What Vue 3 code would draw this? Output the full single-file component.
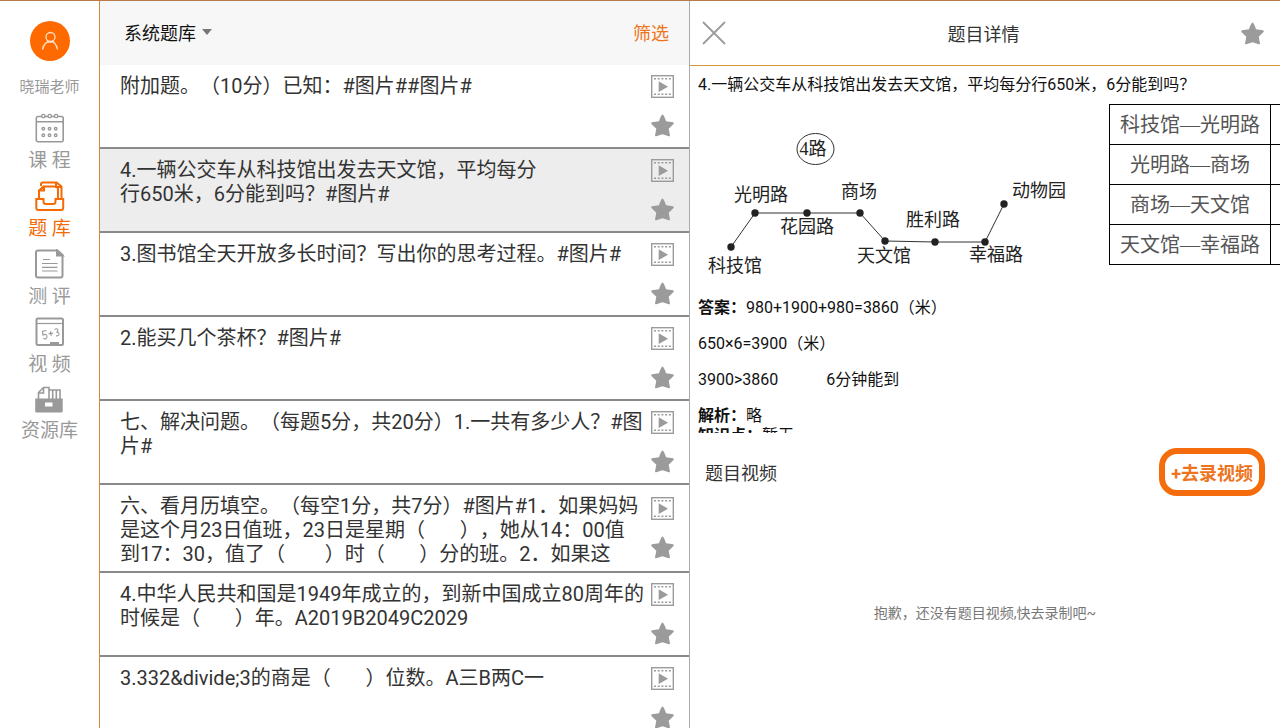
<script setup>
const navItems = [
  { id: 'course', label: '课 程' },
  { id: 'bank', label: '题 库', active: true },
  { id: 'exam', label: '测 评' },
  { id: 'video', label: '视 频' },
  { id: 'library', label: '资源库' }
]

const questions = [
  { text: '附加题。（10分）已知：#图片##图片#' },
  { text: '4.一辆公交车从科技馆出发去天文馆，平均每分\n行650米，6分能到吗？#图片#', selected: true },
  { text: '3.图书馆全天开放多长时间？写出你的思考过程。#图片#' },
  { text: '2.能买几个茶杯？#图片#' },
  { text: '七、解决问题。（每题5分，共20分）1.一共有多少人？#图\n片#' },
  { text: '六、看月历填空。（每空1分，共7分）#图片#1．如果妈妈\n是这个月23日值班，23日是星期（       ），她从14：00值\n到17：30，值了（        ）时（       ）分的班。2．如果这' },
  { text: '4.中华人民共和国是1949年成立的，到新中国成立80周年的\n时候是（       ）年。A2019B2049C2029' },
  { text: '3.332&divide;3的商是（       ）位数。A三B两C一' }
]

const stops = [
  [33, 143], [57, 109], [109, 109], [162, 109], [187, 137], [237, 138], [287, 138], [306, 100]
]
const stopPath = stops.map((s) => s.join(',')).join(' ')
const stopLabels = [
  { x: 37, y: 168, name: '科技馆' },
  { x: 63, y: 97, name: '光明路' },
  { x: 109, y: 129, name: '花园路' },
  { x: 161, y: 94, name: '商场' },
  { x: 186, y: 158, name: '天文馆' },
  { x: 235, y: 122, name: '胜利路' },
  { x: 298, y: 157, name: '幸福路' },
  { x: 341, y: 93, name: '动物园' }
]

const segments = ['科技馆—光明路', '光明路—商场', '商场—天文馆', '天文馆—幸福路']
</script>

<template>
  <div class="app">
    <nav class="sidebar">
      <button class="avatar" aria-label="晓瑞老师">
        <svg width="40" height="40" viewBox="0 0 40 40">
          <circle cx="20.500" cy="16" r="4.500" />
          <path d="M12.500 28.500c1-5 4-8 8-8s6 3 7 8M17 20l2 1h3l2-1" />
        </svg>
      </button>
      <div class="name">晓瑞老师</div>
      <a v-for="n in navItems" :key="n.id" href="#" class="nav" :class="{ active: n.active }">
        <svg v-if="n.id === 'course'" width="30" height="30" viewBox="0 0 30 30">
          <path d="M6.500 3.500H3a1.700 1.700 0 0 0-1.700 1.700V27A1.700 1.700 0 0 0 3 28.700h23.500a1.700 1.700 0 0 0 1.700-1.700V5.200a1.700 1.700 0 0 0-1.700-1.700H23M10 3.500h3M16.500 3.500h3M1.500 8.800h26.500" />
          <g stroke-width="1.300">
            <circle cx="8.300" cy="3" r="1.700" /><circle cx="14.700" cy="3" r="1.700" /><circle cx="21.100" cy="3" r="1.700" />
            <circle cx="8.300" cy="15.800" r="1.300" /><circle cx="14.500" cy="15.800" r="1.300" /><circle cx="20.700" cy="15.800" r="1.300" />
            <circle cx="8.300" cy="22.300" r="1.300" /><circle cx="14.500" cy="22.300" r="1.300" /><circle cx="20.700" cy="22.300" r="1.300" />
          </g>
        </svg>
        <svg v-else-if="n.id === 'bank'" class="bold" width="30" height="30" viewBox="0 0 30 30">
          <path d="M4 17V9.500L8.500 5.500H20.500q2.500 0 2.500 3V17M4.500 9.500H9V5.500" />
          <path d="M6 5V3q0-1.500 2-1.500H21.500l5 4V17M21 1.500v4.500h5.500" />
          <path d="M1.300 18H8.500v2.500q0 2.500 2.500 2.500h7q2.500 0 2.500-2.500V18h7.700v9q0 2-2 2H3.300q-2 0-2-2Z" />
        </svg>
        <svg v-else-if="n.id === 'exam'" class="bold" width="30" height="30" viewBox="0 0 30 30">
          <path d="M3 1.500H22.500L27.500 6V26.500q0 2-2 2H3q-2 0-2-2v-23q0-2 2-2Z" />
          <path d="M22 1.500v5h5.500Z" fill="currentColor" />
          <path d="M8 10.500h7M7 14.500h15.500M7 18.300h15.500M7 22h15.500" stroke-width="1.200" />
        </svg>
        <svg v-else-if="n.id === 'video'" class="bold" width="30" height="30" viewBox="0 0 30 30">
          <rect x="1.500" y="1.500" width="26.500" height="26.500" rx="1.500" />
          <path d="M1.500 6.500H28" stroke-width="1.200" />
          <path d="M15 25h9v3h-9Z" fill="currentColor" stroke="none" />
          <path d="M11.500 13.500l-4 .6.500 4c2-1.500 4-.5 4 1.500s-2 3-3.700 1.500M13.500 16.800l4.500-.7M15.500 14.300l.8 4.500M19.500 12.500c3-2 5 1 2 2.700 4-.2 3 4.500-.5 3.500" stroke-width="1.100" />
        </svg>
        <svg v-else width="30" height="28" viewBox="0 0 30 28">
          <path d="M1.200 13.500h27.500V26q0 1.500-1.500 1.500h-24.500q-1.500 0-1.500-1.500Z" fill="currentColor" stroke="none" />
          <path d="M4.500 14V7.500L9.500 2.500H15V14M4.500 8h5V3M15 5h11V14M18.700 5v9M22.300 5v9" />
          <path d="M11 17.500h7.500v4H11Z" fill="#fff" stroke="none" />
        </svg>
        <span>{{ n.label }}</span>
      </a>
    </nav>

    <section class="list">
      <header class="list-head">
        <button class="picker">系统题库<i class="caret"></i></button>
        <button class="filter">筛选</button>
      </header>
      <ul class="rows">
        <li v-for="(q, i) in questions" :key="i" class="row" :class="{ selected: q.selected }">
          <p>{{ q.text }}</p>
          <div class="actions">
            <button aria-label="视频">
              <svg width="23" height="23" viewBox="0 0 23 23">
                <rect x="0.700" y="0.700" width="21.600" height="21.600" fill="none" stroke="currentColor" stroke-width="1.400" />
                <path d="M3 3.800h17M3 19.300h17" fill="none" stroke="currentColor" stroke-width="1.500" stroke-dasharray="2 1.700" />
                <path d="M7.700 6.300 17 11.700 7.700 17Z" fill="currentColor" />
              </svg>
            </button>
            <button aria-label="收藏">
              <svg width="23" height="23" viewBox="0 0 23 23">
                <path d="M11.500.5Q13 1 15 7.300l7 .9q1.500.6.300 2L17.700 14.800 19 21.500q-.4 1.300-2 .6L11.500 20.300 6 22.100q-1.600.7-2-.6L5.300 14.800.7 10.200q-1.200-1.400.3-2l7-.9Q10 1 11.500.5Z" fill="currentColor" />
              </svg>
            </button>
          </div>
        </li>
      </ul>
    </section>

    <main class="detail">
      <header class="detail-head">
        <button aria-label="关闭">
          <svg width="24" height="24" viewBox="0 0 24 24"><path d="M1 1 23 23M23 1 1 23" fill="none" stroke="currentColor" stroke-width="1.800" /></svg>
        </button>
        <h1>题目详情</h1>
        <button aria-label="收藏">
          <svg width="23" height="23" viewBox="0 0 23 23">
            <path d="M11.500.5Q13 1 15 7.300l7 .9q1.500.6.300 2L17.700 14.800 19 21.500q-.4 1.300-2 .6L11.500 20.300 6 22.100q-1.600.7-2-.6L5.300 14.800.7 10.200q-1.200-1.400.3-2l7-.9Q10 1 11.500.5Z" fill="currentColor" />
          </svg>
        </button>
      </header>

      <article class="content">
        <p class="stem">4.一辆公交车从科技馆出发去天文馆，平均每分行650米，6分能到吗？</p>
        <div class="figures">
          <svg class="route" width="411" height="184" viewBox="0 0 411 184">
            <ellipse cx="117.500" cy="45" rx="18.500" ry="15.500" />
            <text x="115" y="51">4路</text>
            <polyline :points="stopPath" />
            <circle v-for="(s, i) in stops" :key="i" :cx="s[0]" :cy="s[1]" r="3.700" />
            <text v-for="l in stopLabels" :key="l.name" :x="l.x" :y="l.y">{{ l.name }}</text>
          </svg>
          <table>
            <tbody>
              <tr v-for="s in segments" :key="s"><td>{{ s }}</td><td></td></tr>
            </tbody>
          </table>
        </div>
        <p><b>答案：</b>980+1900+980=3860（米）</p>
        <p>650×6=3900（米）</p>
        <p>3900&gt;3860　　　6分钟能到</p>
        <div><b>解析：</b>略</div>
        <div><b>知识点：</b>暂无</div>
      </article>

      <section class="videos">
        <div class="videos-head">
          <h2>题目视频</h2>
          <button class="record">+去录视频</button>
        </div>
        <div class="empty">抱歉，还没有题目视频,快去录制吧~</div>
      </section>
    </main>
  </div>
</template>

<style>
body {
  margin: 0;
}
</style>

<style scoped>
* {
  box-sizing: border-box;
}
.app {
  display: grid;
  grid-template-columns: 100px minmax(0, 1fr) minmax(0, 1fr);
  height: 100vh;
  overflow: hidden;
  border-top: 1px solid #b97b4b;
  background: #fff;
  color: #333;
  font-family: Roboto, "Noto Sans CJK SC", sans-serif;
  text-spacing-trim: space-all;
}
button {
  display: flex;
  align-items: center;
  padding: 0;
  border: 0;
  background: none;
  color: #9b9b9b;
  font: inherit;
  cursor: pointer;
}
h1,
h2 {
  margin: 0;
  font-size: 18px;
  font-weight: 400;
}
.sidebar {
  display: flex;
  flex-direction: column;
  align-items: center;
  padding-top: 20px;
  border-right: 1px solid #cf8a3c;
}
.avatar {
  border-radius: 50%;
  background: #ff6a00;
}
.avatar svg {
  fill: none;
  stroke: #ffe0c4;
  stroke-width: 1.300;
}
.name {
  margin: 15px 0;
  font-size: 15px;
  line-height: 22px;
  color: #999;
}
.nav {
  display: flex;
  flex-direction: column;
  align-items: center;
  gap: 7px;
  margin-bottom: 9px;
  color: #999;
  font-size: 19px;
  line-height: 22px;
  text-decoration: none;
}
.nav.active {
  color: #f56a05;
}
.nav svg {
  fill: none;
  stroke: currentColor;
  stroke-width: 1.600;
}
.nav svg.bold {
  stroke-width: 2;
}
.list {
  display: flex;
  flex-direction: column;
  min-height: 0;
  border-right: 1px solid #aaa;
  overflow: hidden;
}
.list-head {
  display: flex;
  flex: none;
  align-items: center;
  justify-content: space-between;
  height: 64px;
  padding: 0 20px 2px 24px;
  background: #f7f7f7;
  font-size: 18px;
}
.picker {
  gap: 6px;
  color: #111;
}
.caret {
  border: 5px solid transparent;
  border-top: 6px solid #777;
  border-bottom: 0;
}
.filter {
  color: #f0741a;
}
.rows {
  flex: 1;
  min-height: 0;
  margin: 0;
  padding: 0;
  overflow: hidden;
  list-style: none;
}
.row {
  display: flex;
  align-items: center;
  justify-content: space-between;
  min-height: 84px;
  padding: 0 15px 0 20px;
  border-bottom: 2px solid #8a8a8a;
}
.row.selected {
  background: #ededed;
}
.row p {
  align-self: flex-start;
  margin: 0;
  padding: 9px 0 5px;
  font-size: 20px;
  line-height: 24px;
  white-space: pre;
}
.actions {
  display: flex;
  flex-direction: column;
  gap: 16px;
}
.detail {
  display: flex;
  flex-direction: column;
  min-height: 0;
}
.detail-head {
  display: flex;
  flex: none;
  align-items: center;
  justify-content: space-between;
  height: 65px;
  padding: 0 16px 0 12px;
  border-bottom: 1px solid #d29a3a;
}
.content {
  flex: 36 1 0;
  min-height: 0;
  padding-left: 8px;
  overflow: hidden;
  color: #111;
  font-size: 16px;
  line-height: 20px;
}
.content p {
  margin: 0 0 16px;
}
.content .stem {
  margin: 9px 0;
}
.figures {
  display: flex;
  align-items: flex-start;
  margin-bottom: 10px;
  font-family: "Liberation Serif", "Noto Sans CJK SC", serif;
}
.route {
  flex: none;
  fill: #222;
  font-size: 18px;
  text-anchor: middle;
}
.route ellipse,
.route polyline {
  fill: none;
  stroke: #333;
}
table {
  flex: none;
  border-collapse: collapse;
  color: #555;
  font-size: 20px;
}
td {
  height: 40px;
  min-width: 100px;
  padding: 0 10px;
  border: 1px solid #000;
  text-align: center;
}
.videos {
  display: flex;
  flex: 29 1 0;
  flex-direction: column;
  min-height: 0;
}
.videos-head {
  display: flex;
  align-items: center;
  justify-content: space-between;
  padding: 15px 15px 0;
}
.record {
  height: 48px;
  padding: 0 6px;
  border: 6px solid #f56c0c;
  border-radius: 18px;
  color: #ee7420;
  font-size: 18px;
  font-weight: 700;
}
.empty {
  display: flex;
  flex: 1;
  align-items: center;
  justify-content: center;
  color: #777;
  font-size: 14px;
}
</style>
